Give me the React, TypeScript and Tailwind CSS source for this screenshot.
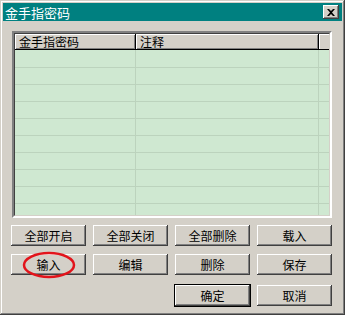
import React from 'react';

const raised =
  'shadow-[inset_-1px_-1px_0_#404040,inset_1px_1px_0_#ffffff,inset_-2px_-2px_0_#808080,inset_2px_2px_0_#d4d0c8]';

const rows = Array.from({ length: 10 });

function Btn({ label, isDefault }: { label: string; isDefault?: boolean }) {
  return (
    <button
      className={`h-[21px] w-[75px] bg-[#d4d0c8] text-[12px] leading-none text-black ${raised} ${
        isDefault ? 'outline outline-1 outline-black' : ''
      }`}
    >
      {label}
    </button>
  );
}

export default function App() {
  return (
    <div
      className="relative h-[315px] w-[345px] overflow-hidden bg-[#d4d0c8] shadow-[inset_-1px_-1px_0_#404040,inset_1px_1px_0_#d4d0c8,inset_-2px_-2px_0_#808080,inset_2px_2px_0_#ffffff]"
      style={{ fontFamily: '"Noto Sans CJK SC", "DejaVu Sans", sans-serif' }}
    >
      {/* 标题栏 */}
      <div className="mx-[3px] mt-[3px] flex h-[18px] items-center justify-between bg-[#008080] pl-[2px] pr-[3px]">
        <span className="text-[13px] leading-none text-white">金手指密码</span>
        <div className={`flex h-[14px] w-[16px] items-center justify-center bg-[#d4d0c8] ${raised}`}>
          <svg width="8" height="7" viewBox="0 0 8 7">
            <path d="M0 0h2l2 2 2-2h2L5 3.5 8 7H6L4 5 2 7H0l3-3.5z" fill="#000" />
          </svg>
        </div>
      </div>

      {/* 列表 */}
      <div className="ml-[12px] mt-[10px] h-[187px] w-[320px] border-2 border-t-[#808080] border-l-[#808080] border-b-white border-r-white">
        <div className="h-full w-full overflow-hidden border border-t-[#404040] border-l-[#404040] border-b-[#d4d0c8] border-r-[#d4d0c8] bg-[#cfe8d1]">
          <div className="flex h-[16px] text-[12px] leading-none text-black">
            <div className="flex w-[121px] items-center border-b border-r border-black bg-[#d4d0c8] pl-[4px] shadow-[inset_1px_1px_0_#fff,inset_-1px_-1px_0_#808080]">
              金手指密码
            </div>
            <div className="flex w-[183px] items-center border-b border-r border-black bg-[#d4d0c8] pl-[4px] shadow-[inset_1px_1px_0_#fff,inset_-1px_-1px_0_#808080]">
              注释
            </div>
            <div className="flex-1 border-b border-black bg-[#d4d0c8] shadow-[inset_1px_1px_0_#fff]" />
          </div>
          {rows.map((_, i) => (
            <div key={i} className={`flex border-b border-[#bcd3bd] ${i === 0 ? 'h-[18px]' : 'h-[17px]'}`}>
              <div className="w-[121px] border-r border-[#bcd3bd]" />
              <div className="w-[183px] border-r border-[#bcd3bd]" />
              <div className="flex-1" />
            </div>
          ))}
        </div>
      </div>

      {/* 按钮 */}
      <div className="ml-[11px] mt-[7px] grid w-[322px] grid-cols-[75px_75px_75px_75px] gap-x-[7px]">
        <Btn label="全部开启" />
        <Btn label="全部关闭" />
        <Btn label="全部删除" />
        <Btn label="载入" />
      </div>
      <div className="relative ml-[11px] mt-[8px] grid w-[322px] grid-cols-[75px_75px_75px_75px] gap-x-[7px]">
        <Btn label="输入" />
        <Btn label="编辑" />
        <Btn label="删除" />
        <Btn label="保存" />
        <svg className="absolute left-[11px] top-[-3px]" width="54" height="28" viewBox="0 0 54 28">
          <ellipse cx="27" cy="14" rx="25" ry="12" fill="none" stroke="#e2141b" strokeWidth="2.5" />
        </svg>
      </div>
      <div className="ml-[11px] mt-[10px] grid w-[322px] grid-cols-[75px_75px_75px_75px] gap-x-[7px]">
        <div />
        <div />
        <Btn label="确定" isDefault />
        <Btn label="取消" />
      </div>
    </div>
  );
}
